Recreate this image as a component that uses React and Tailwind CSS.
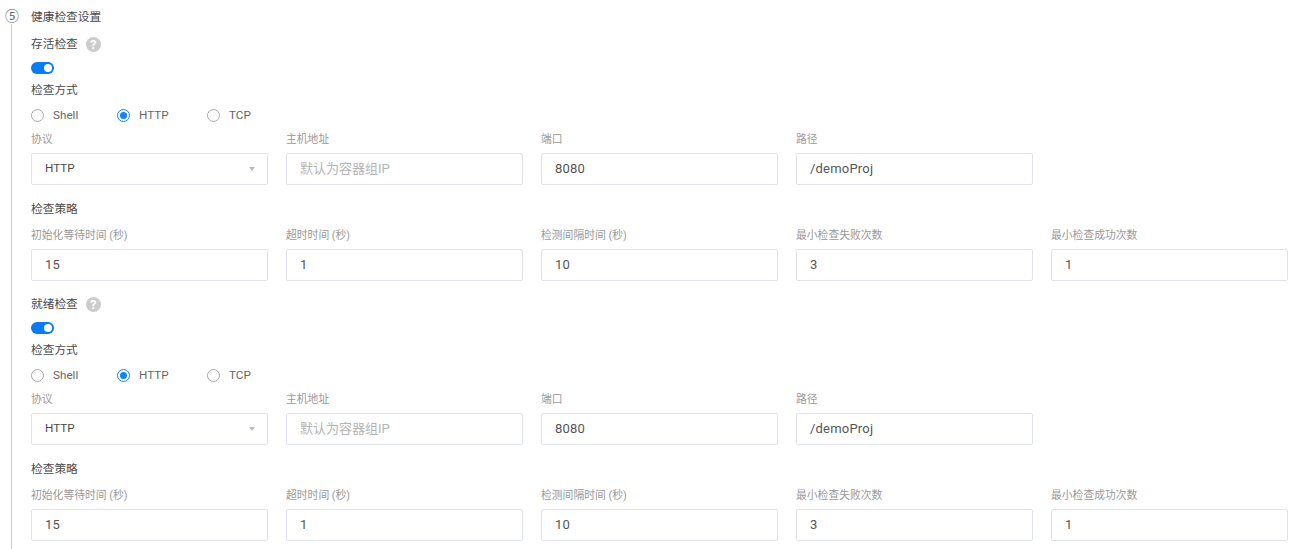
const font = { fontFamily: 'Roboto, "Noto Sans CJK SC", sans-serif' };

function Help() {
  return (
    <span className="ml-[8px] flex h-[15px] w-[15px] items-center justify-center rounded-full bg-[#cccccc] text-[13px] font-bold leading-none text-white">?</span>
  );
}

function Field({ label, value, placeholder, select }) {
  return (
    <div className="w-[237px] shrink-0">
      <div className="flex h-[24px] items-center pb-[2px] text-[10.8px] text-[#999999]">{label}</div>
      <div className="flex h-[32px] items-center justify-between rounded-[2px] border border-[#e1e3ea] bg-white pl-[13px] pr-[13px]">
        {select ? (
          <span className="text-[11.7px] text-[#4a4a4a]">{value}</span>
        ) : placeholder ? (
          <span className="text-[13px] text-[#b5b5b5]">{placeholder}</span>
        ) : (
          <span className="text-[13px] tracking-[0.2px] text-[#555555]">{value}</span>
        )}
        {select && <span className="mr-[-1px] h-0 w-0 border-x-[3.5px] border-t-[4px] border-x-transparent border-t-[#bbbbbb]" />}
      </div>
    </div>
  );
}

function Radio({ label, checked, width }) {
  return (
    <div className="flex items-center" style={{ width }}>
      <span className={`flex h-[13px] w-[13px] items-center justify-center rounded-full border bg-white ${checked ? 'border-[#1482f0]' : 'border-[#aaaaaa]'}`}>
        {checked && <span className="h-[7px] w-[7px] rounded-full bg-[#1482f0]" />}
      </span>
      <span className="ml-[9px] text-[11.7px] text-[#666666]">{label}</span>
    </div>
  );
}

function Probe({ title }) {
  return (
    <section>
      <div className="flex h-[26px] items-center text-[11.7px] text-[#4a4a4a]">
        <span className="pt-[2px]">{title}</span>
        <Help />
      </div>
      <div className="flex h-[22px] items-center">
        <span className="flex h-[12px] w-[23px] items-center justify-end rounded-full bg-[#0a7bf0] pr-[2px]">
          <span className="h-[8px] w-[8px] rounded-full bg-white" />
        </span>
      </div>
      <div className="flex h-[22px] items-center pt-[2px] text-[11.7px] text-[#4a4a4a]">检查方式</div>
      <div className="flex h-[28px] items-center pt-[1px]">
        <Radio label="Shell" width="86px" />
        <Radio label="HTTP" checked width="90px" />
        <Radio label="TCP" />
      </div>
      <div className="flex gap-[18px]">
        <Field label="协议" value="HTTP" select />
        <Field label="主机地址" placeholder="默认为容器组IP" />
        <Field label="端口" value="8080" />
        <Field label="路径" value="/demoProj" />
      </div>
      <div className="flex h-[40px] items-center pt-[10px] text-[11.7px] text-[#4a4a4a]">检查策略</div>
      <div className="flex gap-[18px]">
        <Field label="初始化等待时间 (秒)" value="15" />
        <Field label="超时时间 (秒)" value="1" />
        <Field label="检测间隔时间 (秒)" value="10" />
        <Field label="最小检查失败次数" value="3" />
        <Field label="最小检查成功次数" value="1" />
      </div>
    </section>
  );
}

export default function App() {
  return (
    <div className="relative h-[549px] w-[1299px] overflow-hidden bg-white pl-[31px]" style={font}>
      <div className="absolute left-[11px] top-[24px] bottom-0 w-px bg-[#cccccc]" />
      <span className="absolute left-[4px] top-[6px] flex h-[20px] w-[16px] items-center justify-center text-[14px] leading-none text-[#666666]">⑤</span>
      <div className="flex h-[31px] items-center pt-[5px] text-[11.7px] text-[#4a4a4a]">健康检查设置</div>
      <Probe title="存活检查" />
      <div className="h-[10px]" />
      <Probe title="就绪检查" />
    </div>
  );
}
